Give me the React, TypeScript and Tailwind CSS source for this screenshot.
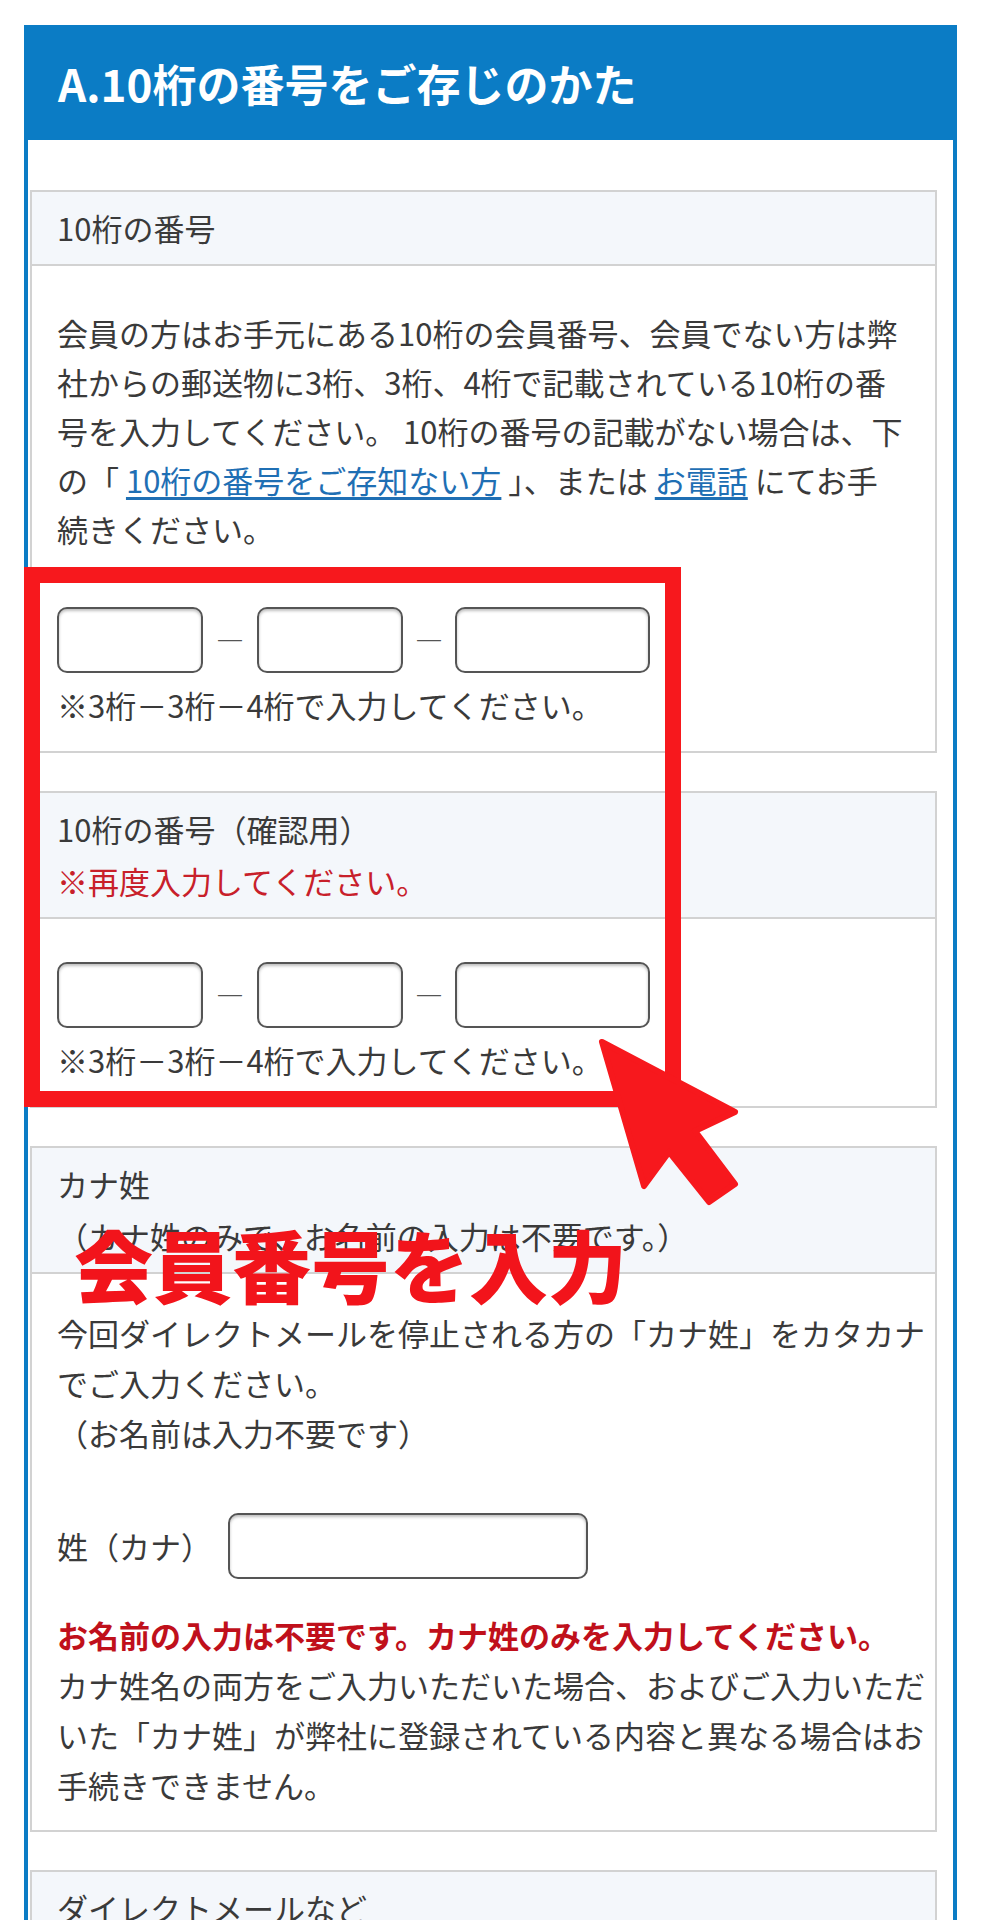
const NumberInput = ({ w }: { w: string }) => (
  <input
    type="text"
    className={`h-[66px] ${w} rounded-[10px] border-2 border-[#555] bg-white shadow-[inset_0_2px_3px_rgba(0,0,0,0.25)]`}
  />
)

const Dash = ({ w }: { w: string }) => (
  <span className={`${w} text-center text-[28px] leading-none text-[#555]`}>―</span>
)

const NumberRow = () => (
  <div className="flex items-center">
    <NumberInput w="w-[146px]" />
    <Dash w="w-[54px]" />
    <NumberInput w="w-[146px]" />
    <Dash w="w-[52px]" />
    <NumberInput w="w-[195px]" />
  </div>
)

const Field = ({ head, children }: { head: React.ReactNode; children: React.ReactNode }) => (
  <div className="border-2 border-[#d2d2d2]">
    <div className="border-b-2 border-[#d2d2d2] bg-[#f4f7fb] px-[25px] py-[10px] leading-[52px]">{head}</div>
    <div className="px-[25px]">{children}</div>
  </div>
)

export default function App() {
  return (
    <div className="relative h-[1920px] w-[981px] overflow-hidden bg-white font-['Noto_Sans_CJK_JP',sans-serif] text-[31px] text-[#3a3a3a]">
      <div className="ml-[24px] mt-[25px] w-[933px]">
        <div className="flex h-[115px] items-center bg-[#0b7cc5] px-[34px]">
          <h2 className="text-[44px] font-bold leading-none text-white">A.10桁の番号をご存じのかた</h2>
        </div>

        <div className="flex flex-col gap-[38px] border-x-4 border-[#0b7cc5] pl-[2px] pr-[16px] pt-[50px]">
          <Field head="10桁の番号">
            <div className="whitespace-nowrap pt-[42px] leading-[49px]">
              会員の方はお手元にある10桁の会員番号、会員でない方は弊
              <br />
              社からの郵送物に3桁、3桁、4桁で記載されている10桁の番
              <br />
              号を入力してください。 10桁の番号の記載がない場合は、下
              <br />
              の「 <a className="text-[#1f6fb4] underline underline-offset-4">10桁の番号をご存知ない方</a> 」、または{" "}
              <a className="text-[#1f6fb4] underline underline-offset-4">お電話</a> にてお手
              <br />
              続きください。
            </div>
            <div className="mt-[54px]">
              <NumberRow />
            </div>
            <p className="mt-[7px] pb-[22px] leading-[49px]">※3桁－3桁－4桁で入力してください。</p>
          </Field>

          <Field
            head={
              <>
                <p>10桁の番号（確認用）</p>
                <p className="text-[#c8202a]">※再度入力してください。</p>
              </>
            }
          >
            <div className="pt-[43px]">
              <NumberRow />
            </div>
            <p className="mt-[7px] pb-[22px] leading-[49px]">※3桁－3桁－4桁で入力してください。</p>
          </Field>

          <Field
            head={
              <>
                <p>カナ姓</p>
                <p>（カナ姓のみで、お名前の入力は不要です。）</p>
              </>
            }
          >
            <div className="whitespace-nowrap pt-[34px] leading-[50px]">
              今回ダイレクトメールを停止される方の「カナ姓」をカタカナ
              <br />
              でご入力ください。
              <br />
              （お名前は入力不要です）
            </div>
            <div className="mt-[55px] flex items-center gap-[16px]">
              <span className="shrink-0 whitespace-nowrap leading-[50px]">姓（カナ）</span>
              <input
                type="text"
                className="h-[66px] w-[360px] shrink-0 rounded-[10px] border-2 border-[#555] bg-white shadow-[inset_0_2px_3px_rgba(0,0,0,0.25)]"
              />
            </div>
            <div className="mt-[31px] whitespace-nowrap pb-[20px] leading-[50px]">
              <p className="font-bold text-[#c0101b]">お名前の入力は不要です。カナ姓のみを入力してください。</p>
              カナ姓名の両方をご入力いただいた場合、およびご入力いただ
              <br />
              いた「カナ姓」が弊社に登録されている内容と異なる場合はお
              <br />
              手続きできません。
            </div>
          </Field>

          <Field head="ダイレクトメールなど">
            <div className="h-[200px]" />
          </Field>
        </div>
      </div>

      <div className="absolute left-[24px] top-[567px] h-[540px] w-[657px] border-[16px] border-[#f7181d]" />

      <svg className="absolute left-[592px] top-[1034px]" width="155" height="180" viewBox="0 0 155 180">
        <polygon
          points="10,8 143,78 103,97 143,150 117,168 77,118 52,152"
          fill="#f7181d"
          stroke="#f7181d"
          strokeWidth="6"
          strokeLinejoin="round"
        />
      </svg>

      <div className="absolute left-[74px] top-[1224px] text-[79px] font-black leading-[80px] text-[#f2141b]">
        会員番号を入力
      </div>
    </div>
  )
}
